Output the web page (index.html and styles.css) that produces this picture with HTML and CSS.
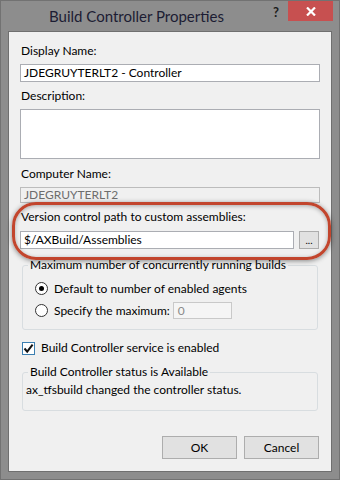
FILE: index.html
```html
<!DOCTYPE html>
<html lang="en">
<head>
    <meta charset="UTF-8">
    <title>Build Controller Properties</title>
    <link rel="stylesheet" href="styles.css">
</head>
<body>
    <div class="window">
        <div class="titlebar">
            <span class="title">Build Controller Properties</span>
            <span class="help">?</span>
            <span class="close">
                <svg width="10" height="9" viewBox="0 0 10 9">
                    <path d="M1 0.5 L9 8.5 M9 0.5 L1 8.5" stroke="#fff" stroke-width="2.2"/>
                </svg>
            </span>
        </div>
        <div class="client">
            <div class="label">Display Name:</div>
            <div class="textbox">JDEGRUYTERLT2 - Controller</div>

            <div class="label label-gap">Description:</div>
            <div class="textbox textarea"></div>

            <div class="label label-gap-lg">Computer Name:</div>
            <div class="textbox disabled">JDEGRUYTERLT2</div>

            <div class="label label-gap">Version control path to custom assemblies:</div>
            <div class="path-row">
                <div class="textbox path">$/AXBuild/Assemblies</div>
                <button class="browse">...</button>
            </div>

            <fieldset class="group group-max">
                <legend>Maximum number of concurrently running builds</legend>
                <div class="option">
                    <span class="radio checked"></span>
                    <span>Default to number of enabled agents</span>
                </div>
                <div class="option option-spec">
                    <span class="radio"></span>
                    <span>Specify the maximum:</span>
                    <span class="spin">0</span>
                </div>
            </fieldset>

            <div class="check-row">
                <span class="checkbox">
                    <svg width="11" height="11" viewBox="0 0 11 11">
                        <path d="M1.5 5.5 L4.2 8.6 L9.6 1.6" fill="none" stroke="#111" stroke-width="2"/>
                    </svg>
                </span>
                <span>Build Controller service is enabled</span>
            </div>

            <fieldset class="group group-status">
                <legend>Build Controller status is Available</legend>
                <div class="status-text">ax_tfsbuild changed the controller status.</div>
            </fieldset>

            <div class="buttons">
                <button class="btn">OK</button>
                <button class="btn">Cancel</button>
            </div>
        </div>
        <div class="highlight"></div>
    </div>
</body>
</html>
```

FILE: styles.css
```css
body {
    margin: 0;
    font-family: "Segoe UI", Lato, sans-serif;
    font-size: 12px;
    color: #000000;
}

.window {
    position: relative;
    width: 340px;
    height: 480px;
    box-sizing: border-box;
    background-color: #8d8d8d;
    border: 1px solid #727272;
    display: flex;
    flex-direction: column;
}

.titlebar {
    height: 30px;
    display: flex;
    align-items: flex-start;
}

.title {
    margin-left: 48px;
    margin-top: 5px;
    font-size: 15px;
    line-height: 20px;
    color: #1c1c33;
}

.help {
    margin-left: auto;
    margin-right: 9px;
    margin-top: 3px;
    font-weight: bold;
    font-size: 13px;
    color: #1c1c1c;
}

.close {
    width: 45px;
    height: 20px;
    margin-right: 6px;
    background-color: #c75050;
    display: flex;
    align-items: center;
    justify-content: center;
}

.client {
    flex: 1;
    margin: 0 7px 7px 7px;
    background-color: #f0f0f0;
    border: 1px solid #6f6f6f;
    padding: 11px 11px 0 11px;
    display: flex;
    flex-direction: column;
}

.label {
    line-height: 16px;
    padding-left: 1px;
}

.label-gap {
    margin-top: 6px;
}

.label-gap-lg {
    margin-top: 7px;
}

.textbox {
    box-sizing: border-box;
    height: 18px;
    margin-top: 5px;
    border: 1px solid #abadb3;
    background-color: #ffffff;
    padding: 0 3px;
    line-height: 16px;
    white-space: nowrap;
}

.textarea {
    height: 50px;
}

.disabled {
    height: 16px;
    line-height: 14px;
    background-color: #f0f0f0;
    border-color: #bcbcbc;
    color: #6d6d6d;
}

.path-row {
    display: flex;
    gap: 5px;
    margin-top: 6px;
}

.path-row .textbox {
    margin-top: 0;
}

.path {
    flex: 1;
}

.browse {
    width: 20px;
    height: 18px;
    padding: 0;
    margin-right: 1px;
    border: 1px solid #adadad;
    background-color: #e1e1e1;
    font-family: inherit;
    font-size: 10px;
    line-height: 12px;
}

.group {
    margin: 8px 2px 0 2px;
    padding: 0 3px;
    border: 1px solid #d8dde0;
    border-radius: 3px;
    min-width: 0;
}

.group legend {
    padding: 0 2px;
    margin-left: 2px;
    line-height: 16px;
}

.group-max {
    padding-bottom: 10px;
}

.option {
    display: flex;
    align-items: center;
    gap: 6px;
    margin-left: 9px;
    height: 16px;
    margin-top: 7px;
}

.option-spec {
    height: 18px;
    margin-top: 5px;
}

.radio {
    width: 11px;
    height: 11px;
    border: 1px solid #333333;
    border-radius: 50%;
    background-color: #ffffff;
    display: flex;
    align-items: center;
    justify-content: center;
}

.radio.checked::after {
    content: "";
    width: 5px;
    height: 5px;
    border-radius: 50%;
    background-color: #000000;
}

.spin {
    box-sizing: border-box;
    width: 59px;
    height: 17px;
    margin-left: -3px;
    border: 1px solid #c9c9c9;
    background-color: #f5f5f5;
    color: #8a8a8a;
    padding: 0 4px;
    line-height: 15px;
}

.check-row {
    display: flex;
    align-items: center;
    gap: 6px;
    margin: 10px 0 0 2px;
    line-height: 16px;
}

.checkbox {
    box-sizing: border-box;
    width: 13px;
    height: 13px;
    border: 1px solid #3c7fb1;
    background-color: #ffffff;
    display: flex;
    align-items: center;
    justify-content: center;
}

.group-status {
    padding-bottom: 12px;
}

.status-text {
    margin-top: 2px;
    line-height: 16px;
}

.buttons {
    display: flex;
    justify-content: flex-end;
    gap: 7px;
    margin-top: 25px;
    margin-right: 1px;
}

.btn {
    width: 75px;
    height: 23px;
    border: 1px solid #adadad;
    background-color: #e1e1e1;
    font-family: inherit;
    font-size: 12px;
    color: #000000;
}

.highlight {
    position: absolute;
    left: 11px;
    top: 201px;
    width: 313px;
    height: 52px;
    border: 3px solid #c2452d;
    border-radius: 24px;
    box-shadow: 0 1px 5px rgba(0, 0, 0, 0.45), inset 0 1px 4px rgba(0, 0, 0, 0.3);
}
```
